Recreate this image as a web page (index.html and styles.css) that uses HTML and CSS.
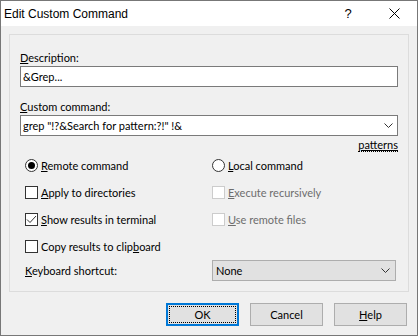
FILE: index.html
```html
<!DOCTYPE html>
<html lang="en">
<head>
    <meta charset="UTF-8">
    <title>Edit Custom Command</title>
    <link rel="stylesheet" href="styles.css">
</head>
<body>
    <div class="window">
        <div class="titlebar">
            <span class="title">Edit Custom Command</span>
            <span class="title-btn">?</span>
            <span class="title-btn">
                <svg width="11" height="11" viewBox="0 0 11 11"><path d="M0.5 0.5 L10.5 10.5 M10.5 0.5 L0.5 10.5" stroke="#000" stroke-width="1" fill="none"/></svg>
            </span>
        </div>

        <div class="dialog">
            <div class="group">
                <div class="label"><u>D</u>escription:</div>
                <div class="edit">&amp;Grep...</div>

                <div class="label spaced"><u>C</u>ustom command:</div>
                <div class="edit combo">
                    <span>grep "!?&amp;Search for pattern:?!" !&amp;</span>
                    <svg class="chevron" width="9" height="5" viewBox="0 0 9 5"><path d="M0.5 0.5 L4.5 4.5 L8.5 0.5" stroke="#333" fill="none"/></svg>
                </div>
                <div class="links"><a class="link">patterns</a></div>

                <div class="options">
                    <div class="option">
                        <span class="radio checked"></span>
                        <span><u>R</u>emote command</span>
                    </div>
                    <div class="option">
                        <span class="radio"></span>
                        <span><u>L</u>ocal command</span>
                    </div>
                    <div class="option">
                        <span class="check"></span>
                        <span><u>A</u>pply to directories</span>
                    </div>
                    <div class="option disabled">
                        <span class="check"></span>
                        <span><u>E</u>xecute recursively</span>
                    </div>
                    <div class="option">
                        <span class="check">
                            <svg width="11" height="11" viewBox="0 0 11 11"><path d="M1 5.5 L4 8.5 L10 2" stroke="#333" stroke-width="1" fill="none"/></svg>
                        </span>
                        <span><u>S</u>how results in terminal</span>
                    </div>
                    <div class="option disabled">
                        <span class="check"></span>
                        <span><u>U</u>se remote files</span>
                    </div>
                    <div class="option">
                        <span class="check"></span>
                        <span>Copy results to clip<u>b</u>oard</span>
                    </div>
                </div>

                <div class="shortcut">
                    <span><u>K</u>eyboard shortcut:</span>
                    <div class="dropdown">
                        <span>None</span>
                        <svg class="chevron" width="9" height="5" viewBox="0 0 9 5"><path d="M0.5 0.5 L4.5 4.5 L8.5 0.5" stroke="#333" fill="none"/></svg>
                    </div>
                </div>
            </div>

            <div class="buttons">
                <button class="default"><span class="focus">OK</span></button>
                <button>Cancel</button>
                <button><u>H</u>elp</button>
            </div>
        </div>
    </div>
</body>
</html>
```

FILE: styles.css
```css
body {
    margin: 0;
    font-family: Lato, "Liberation Sans", sans-serif;
    font-size: 11px;
    color: #000;
}

.window {
    width: 418px;
    height: 336px;
    box-sizing: border-box;
    border: 1px solid #777;
    background: #f0f0f0;
    display: flex;
    flex-direction: column;
}

.titlebar {
    height: 25px;
    background: #fff;
    display: flex;
    align-items: center;
    padding-left: 3px;
    font-family: "Liberation Sans", sans-serif;
    font-size: 12px;
}

.title {
    flex: 1;
}

.title-btn {
    width: 46px;
    height: 25px;
    display: flex;
    align-items: center;
    justify-content: center;
    font-size: 13px;
}

.dialog {
    flex: 1;
    padding: 8px 8px 9px 8px;
    display: flex;
    flex-direction: column;
}

.group {
    border: 1px solid #dcdcdc;
    padding: 15px 10px 10px 10px;
}

.label {
    line-height: 15px;
    margin-bottom: 1px;
}

.label.spaced {
    margin-top: 12px;
}

.edit {
    height: 21px;
    box-sizing: border-box;
    border: 1px solid #7a7a7a;
    background: #fff;
    padding: 0 2px;
    line-height: 19px;
    white-space: nowrap;
}

.combo {
    display: flex;
    align-items: center;
    justify-content: space-between;
    padding-right: 4px;
}

.links {
    margin-top: 1px;
    line-height: 15px;
    text-align: right;
}

.link {
    text-decoration: underline;
    border-bottom: 1px dotted #000;
}

.options {
    margin-top: 5px;
    padding-left: 5px;
    display: grid;
    grid-template-columns: 187px 1fr;
    grid-auto-rows: 17px;
    row-gap: 10px;
}

.option {
    display: flex;
    align-items: center;
    gap: 3px;
}

.option.disabled {
    color: #6d6d6d;
}

.radio,
.check {
    width: 13px;
    height: 13px;
    box-sizing: border-box;
    border: 1px solid #333;
    background: #fff;
    display: flex;
    align-items: center;
    justify-content: center;
}

.radio {
    border-radius: 50%;
}

.radio.checked::after {
    content: "";
    width: 7px;
    height: 7px;
    border-radius: 50%;
    background: #000;
}

.disabled .check {
    border-color: #ccc;
}

.shortcut {
    margin-top: 5px;
    padding-left: 5px;
    display: grid;
    grid-template-columns: 187px 184px;
    align-items: center;
}

.dropdown {
    height: 21px;
    box-sizing: border-box;
    border: 1px solid #adadad;
    background: #e1e1e1;
    padding: 0 5px 0 3px;
    display: flex;
    align-items: center;
    justify-content: space-between;
}

.buttons {
    margin-top: 11px;
    padding-right: 2px;
    display: flex;
    justify-content: flex-end;
    gap: 11px;
}

button {
    width: 73px;
    height: 23px;
    box-sizing: border-box;
    border: 1px solid #adadad;
    background: #e1e1e1;
    font: inherit;
    color: #000;
    padding: 0;
}

button.default {
    border: 2px solid #0078d7;
    padding: 1px;
}

.focus {
    display: block;
    height: 100%;
    box-sizing: border-box;
    border: 1px dotted #000;
    line-height: 15px;
}
```
